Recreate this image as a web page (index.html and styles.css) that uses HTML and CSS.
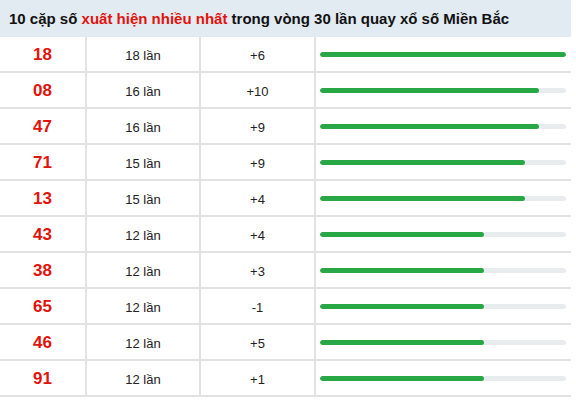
FILE: index.html
```html
<!DOCTYPE html>
<html lang="vi">
<head>
<meta charset="utf-8">
<link rel="stylesheet" href="styles.css">
</head>
<body>
<div class="board">
  <div class="head">10 cặp số <span class="hl">xuất hiện nhiều nhất</span> trong vòng 30 lần quay xổ số Miền Bắc</div>
  <div class="row"><div class="num">18</div><div class="cell">18 lần</div><div class="cell">+6</div><div class="barcell"><div class="track"><div class="fill" style="width:100%"></div></div></div></div>
  <div class="row"><div class="num">08</div><div class="cell">16 lần</div><div class="cell">+10</div><div class="barcell"><div class="track"><div class="fill" style="width:88.9%"></div></div></div></div>
  <div class="row"><div class="num">47</div><div class="cell">16 lần</div><div class="cell">+9</div><div class="barcell"><div class="track"><div class="fill" style="width:88.9%"></div></div></div></div>
  <div class="row"><div class="num">71</div><div class="cell">15 lần</div><div class="cell">+9</div><div class="barcell"><div class="track"><div class="fill" style="width:83.3%"></div></div></div></div>
  <div class="row"><div class="num">13</div><div class="cell">15 lần</div><div class="cell">+4</div><div class="barcell"><div class="track"><div class="fill" style="width:83.3%"></div></div></div></div>
  <div class="row"><div class="num">43</div><div class="cell">12 lần</div><div class="cell">+4</div><div class="barcell"><div class="track"><div class="fill" style="width:66.7%"></div></div></div></div>
  <div class="row"><div class="num">38</div><div class="cell">12 lần</div><div class="cell">+3</div><div class="barcell"><div class="track"><div class="fill" style="width:66.7%"></div></div></div></div>
  <div class="row"><div class="num">65</div><div class="cell">12 lần</div><div class="cell">-1</div><div class="barcell"><div class="track"><div class="fill" style="width:66.7%"></div></div></div></div>
  <div class="row"><div class="num">46</div><div class="cell">12 lần</div><div class="cell">+5</div><div class="barcell"><div class="track"><div class="fill" style="width:66.7%"></div></div></div></div>
  <div class="row"><div class="num">91</div><div class="cell">12 lần</div><div class="cell">+1</div><div class="barcell"><div class="track"><div class="fill" style="width:66.7%"></div></div></div></div>
</div>
</body>
</html>
```
FILE: styles.css
```css
html, body {
  margin: 0;
  padding: 0;
  background: #ffffff;
}
body {
  font-family: "Liberation Sans", Arial, sans-serif;
  color: #222;
}
.board {
  width: 571px;
}
.head {
  height: 37px;
  line-height: 37px;
  background: #e3ebf2;
  font-size: 15px;
  font-weight: bold;
  color: #111;
  padding-left: 9px;
  box-sizing: border-box;
  white-space: nowrap;
}
.hl {
  color: #e3120b;
}
.row {
  display: grid;
  grid-template-columns: 85px 114px 115px 1fr;
  height: 36px;
  border-bottom: 2px solid #e2e2e2;
  box-sizing: border-box;
}
.row > div {
  display: flex;
  align-items: center;
  justify-content: center;
  padding-top: 2px;
}
.row > div + div {
  border-left: 2px solid #e2e2e2;
}
.num {
  color: #e3120b;
  font-weight: bold;
  font-size: 17px;
}
.cell {
  font-size: 13px;
  color: #222;
}
.row > .barcell {
  justify-content: flex-start;
  padding: 0 5px 0 4px;
}
.track {
  width: 100%;
  height: 5px;
  background: #e9ecef;
  border-radius: 3px;
  overflow: hidden;
}
.fill {
  height: 100%;
  background: #28a745;
  border-radius: 3px;
}
```
